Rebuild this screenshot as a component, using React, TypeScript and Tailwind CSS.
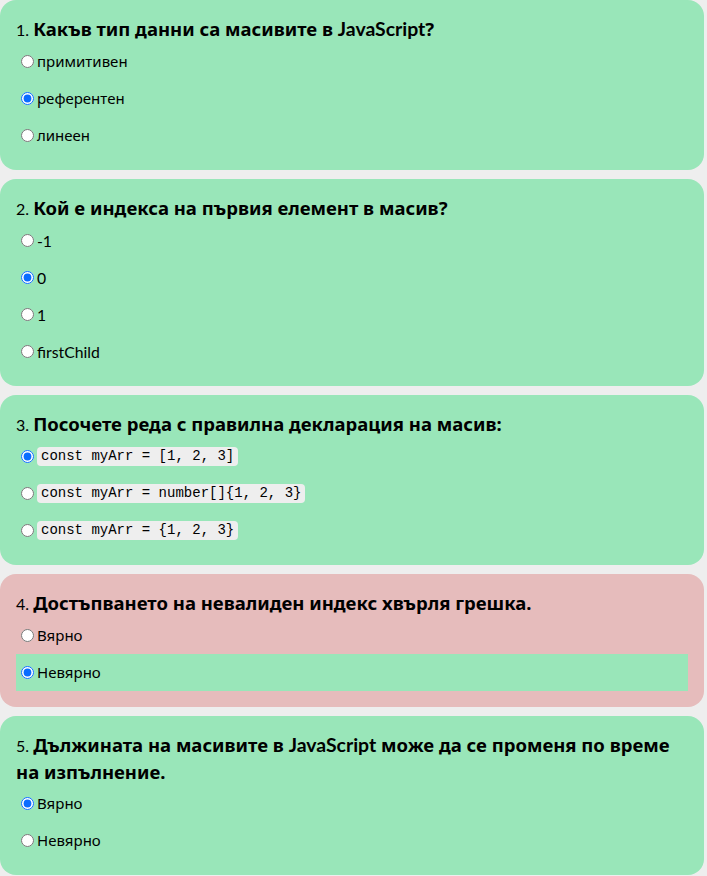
import React from 'react';

type Part = string | { latin: string };

interface Question {
  num: number;
  title: Part[];
  options: { label: Part[]; code?: boolean; checked?: boolean; correct?: boolean }[];
  wrong?: boolean;
}

const questions: Question[] = [
  {
    num: 1,
    title: ['Какъв тип данни са масивите в ', { latin: 'JavaScript' }, '?'],
    options: [
      { label: ['примитивен'] },
      { label: ['референтен'], checked: true },
      { label: ['линеен'] },
    ],
  },
  {
    num: 2,
    title: ['Кой е индекса на първия елемент в масив?'],
    options: [
      { label: [{ latin: '-1' }] },
      { label: [{ latin: '0' }], checked: true },
      { label: [{ latin: '1' }] },
      { label: [{ latin: 'firstChild' }] },
    ],
  },
  {
    num: 3,
    title: ['Посочете реда с правилна декларация на масив:'],
    options: [
      { label: ['const myArr = [1, 2, 3]'], code: true, checked: true },
      { label: ['const myArr = number[]{1, 2, 3}'], code: true },
      { label: ['const myArr = {1, 2, 3}'], code: true },
    ],
  },
  {
    num: 4,
    wrong: true,
    title: ['Достъпването на невалиден индекс хвърля грешка.'],
    options: [
      { label: ['Вярно'] },
      { label: ['Невярно'], checked: true, correct: true },
    ],
  },
  {
    num: 5,
    title: [
      'Дължината на масивите в ',
      { latin: 'JavaScript' },
      ' може да се променя по време на изпълнение.',
    ],
    options: [{ label: ['Вярно'], checked: true }, { label: ['Невярно'] }],
  },
];

const renderParts = (parts: Part[]) =>
  parts.map((p, i) =>
    typeof p === 'string' ? (
      <span key={i}>{p}</span>
    ) : (
      <span key={i} className="font-['Lato',sans-serif] text-[1.05em]">
        {p.latin}
      </span>
    )
  );

const QuestionCard: React.FC<{ q: Question }> = ({ q }) => (
  <div
    className={`rounded-2xl p-4 ${q.wrong ? 'bg-[#e6bcbc]' : 'bg-[#99e6b9]'}`}
  >
    <div className="text-[18.5px] leading-[26px] font-bold text-black">
      <span className="font-normal text-[16px] font-['Lato',sans-serif]">{q.num}. </span>
      {renderParts(q.title)}
    </div>
    {q.options.map((o, i) => (
      <label
        key={i}
        className={`flex items-center h-[37px] text-[15px] text-black ${o.correct ? 'bg-[#99e6b9]' : ''}`}
      >
        <input
          type="radio"
          name={`q${q.num}`}
          defaultChecked={o.checked}
          className="w-[13px] h-[13px] ml-[5px] mr-[3px] accent-[#0a6cff] shrink-0"
        />
        {o.code ? (
          <code className="font-['Liberation_Mono',monospace] text-[14px] leading-[19px] bg-[#eeeeee] rounded px-1">
            {o.label.join('')}
          </code>
        ) : (
          <span>{renderParts(o.label)}</span>
        )}
      </label>
    ))}
  </div>
);

export default function App() {
  return (
    <div className="min-h-[876px] bg-[#eeeeee] font-['Noto_Sans','Open_Sans',sans-serif]">
      <div className="w-[704px] flex flex-col gap-[9px]">
        {questions.map((q) => (
          <QuestionCard key={q.num} q={q} />
        ))}
      </div>
    </div>
  );
}
